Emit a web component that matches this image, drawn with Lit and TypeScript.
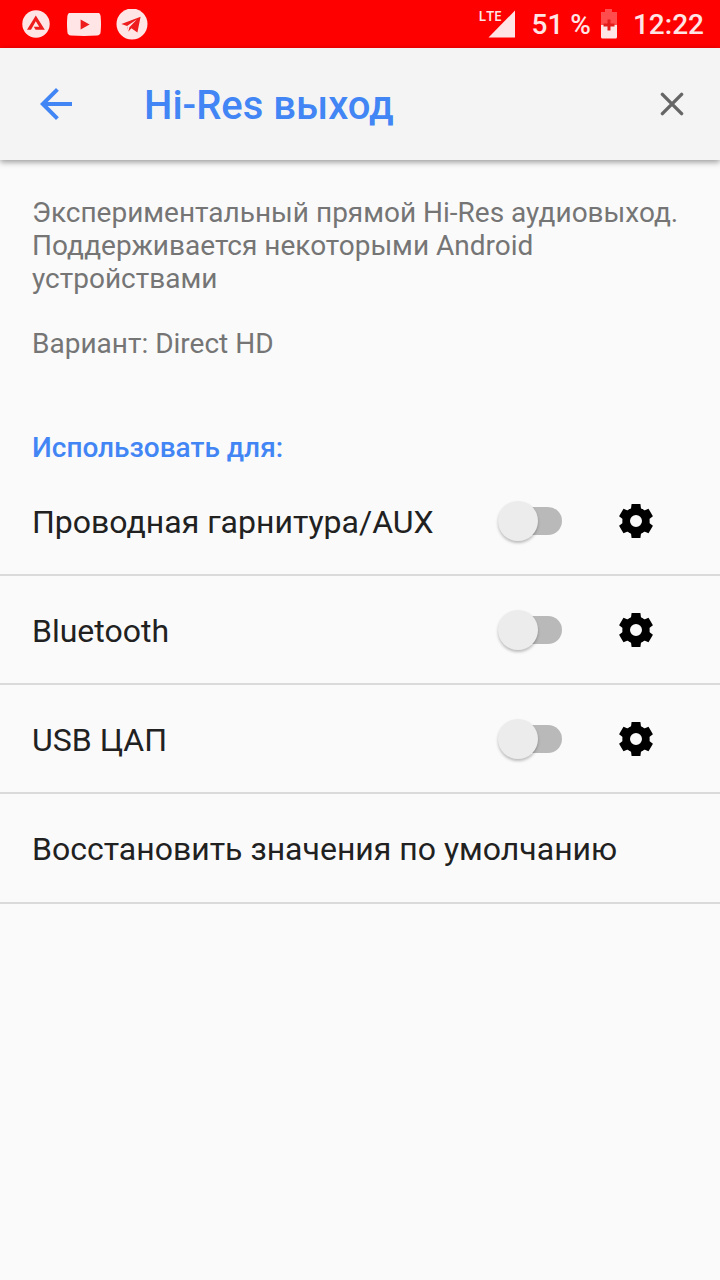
import { LitElement, html, css, svg } from "lit";
import { customElement, property, state } from "lit/decorators.js";

@customElement("status-bar")
class StatusBar extends LitElement {
  static styles = css`
    :host {
      display: flex;
      justify-content: space-between;
      align-items: center;
      box-sizing: border-box;
      height: 48px;
      padding: 2px 16px 0 20px;
      background: #ff0000;
      color: #ffe5e5;
      font-size: 28px;
      line-height: 32px;
      font-weight: 500;
    }
    .group {
      display: flex;
      align-items: center;
      gap: 15px;
    }
    .system {
      gap: 8px;
    }
    .icon {
      display: block;
      flex: none;
    }
    .network {
      position: relative;
      margin-right: 8px;
    }
    .lte {
      position: absolute;
      top: 0;
      left: 0;
      font-family: "Open Sans", sans-serif;
      font-size: 14px;
      line-height: 14px;
      font-weight: 600;
    }
    .clock {
      margin-left: 6px;
    }
  `;

  render() {
    return html`
      <div class="group">
        <svg class="icon" width="32" height="32" viewBox="0 0 32 32" aria-hidden="true">
          <circle cx="16" cy="15" r="13.7" fill="#ffe5e5" />
          <path d="M15.8 6.4L24.8 20.8H15.6L13.8 17.8H19.2L15.8 12.2L11 20.8H7Z" fill="#ee1c1c" />
        </svg>
        <svg class="icon" width="34" height="24" viewBox="0 0 34 24" aria-hidden="true">
          <path d="M4 .4Q17-.4 30 .4Q33.2.6 33.6 4Q34.4 12 33.6 20Q33.2 23.4 30 23.6Q17 24.4 4 23.6Q.8 23.4.4 20Q-.4 12 .4 4Q.8.6 4 .4Z" fill="#ffe5e5" transform="translate(0 -1)" />
          <path d="M13.6 6.6L22.6 11.4L13.6 16.4Z" fill="#ee1c1c" />
        </svg>
        <svg class="icon" width="32" height="32" viewBox="0 0 32 32" aria-hidden="true">
          <circle cx="16" cy="15" r="15.5" fill="#ffe5e5" />
          <path d="M5.4 15L24.6 7.8L21.4 23.6L15.4 19.2L12.4 22.4L11 17Z" fill="#ee1c1c" />
          <path d="M11 17L20.8 10.6L13.4 18.2L12.4 22.4Z" fill="#ffe5e5" />
        </svg>
      </div>
      <div class="group system">
        <div class="network">
          <span class="lte">LTE</span>
          <svg class="icon" width="37" height="32" viewBox="0 0 37 32" aria-hidden="true">
            <path d="M9.5 28.5L36 1.5V28.5Z" fill="#ffe5e5" />
          </svg>
        </div>
        <span>51 %</span>
        <svg class="icon" width="20" height="32" viewBox="0 0 20 32" aria-hidden="true">
          <path d="M2 3H6V0H13V3H18V16H2Z" fill="#ff4c4c" />
          <path d="M2 16H18V28Q18 29.5 16.5 29.5H3.5Q2 29.5 2 28Z" fill="#ffe5e5" />
          <path d="M10 10.5V21.5M4.5 16H15.5" stroke="#e51c1c" stroke-width="3" />
        </svg>
        <span class="clock">12:22</span>
      </div>
    `;
  }
}

@customElement("app-header")
class AppHeader extends LitElement {
  @property() heading = "";

  static styles = css`
    :host {
      display: flex;
      align-items: center;
      height: 112px;
      background: #f4f4f4;
      box-shadow: 0 2px 6px rgba(0, 0, 0, 0.4);
      color: #4285f4;
    }
    .button {
      display: flex;
      align-items: center;
      justify-content: center;
      flex: none;
      border: 0;
      padding: 0;
      background: none;
      width: 112px;
      height: 112px;
      color: inherit;
    }
    .close {
      width: 96px;
      color: #666;
    }
    .title {
      flex: 1;
      margin: 0;
      padding: 4px 0 0 32px;
      font-size: 40px;
      line-height: 48px;
      font-weight: 500;
    }
  `;

  render() {
    return html`
      <button class="button" aria-label="Назад">
        <svg width="48" height="48" viewBox="0 0 24 24" fill="currentColor">
          <path d="M20 11H7.83l5.59-5.59L12 4l-8 8 8 8 1.41-1.41L7.83 13H20z" />
        </svg>
      </button>
      <h1 class="title">${this.heading}</h1>
      <button class="button close" aria-label="Закрыть">
        <svg width="24" height="24" viewBox="0 0 24 24" stroke="currentColor" stroke-width="3.4" stroke-linecap="round">
          <path d="M2.4 2.4L21.6 21.6M21.6 2.4L2.4 21.6" />
        </svg>
      </button>
    `;
  }
}

const tooth = (angle: number) =>
  svg`<path d="M-4.4 -17H4.4L5 -12.5L7 -11H-7L-5 -12.5Z" transform="rotate(${angle})" />`;

@customElement("output-row")
class OutputRow extends LitElement {
  @property() label = "";
  @state() private enabled = false;

  static styles = css`
    :host {
      display: flex;
      align-items: center;
      box-sizing: border-box;
      min-height: 109px;
      padding: 0 46px 0 32px;
      border-bottom: 2px solid #dadada;
    }
    .label {
      flex: 1;
      padding-top: 2px;
      font-size: 32px;
      line-height: 40px;
    }
    .switch {
      appearance: none;
      display: flex;
      align-items: center;
      flex: none;
      width: 58px;
      height: 28px;
      margin: 0 36px 0 16px;
      border-radius: 14px;
      background: #b9b9b9;
    }
    .switch::before {
      content: "";
      flex: none;
      width: 40px;
      height: 40px;
      margin-left: -6px;
      border-radius: 50%;
      background: #ececec;
      box-shadow: 0 2px 3px rgba(0, 0, 0, 0.25);
    }
    .switch:checked::before {
      margin-left: 24px;
      background: #4285f4;
    }
    .settings {
      display: flex;
      align-items: center;
      justify-content: center;
      flex: none;
      width: 76px;
      height: 76px;
      padding: 0;
      border: 0;
      background: none;
      color: #000;
    }
  `;

  private toggle(event: Event) {
    this.enabled = (event.target as HTMLInputElement).checked;
  }

  render() {
    return html`
      <label class="label" for="toggle">${this.label}</label>
      <input id="toggle" class="switch" type="checkbox" role="switch" .checked=${this.enabled} @change=${this.toggle} />
      <button class="settings" aria-label="Настройки: ${this.label}">
        <svg width="36" height="36" viewBox="-18 -18 36 36" fill="currentColor">
          ${[0, 60, 120, 180, 240, 300].map(tooth)}
          <circle r="9.8" fill="none" stroke="currentColor" stroke-width="7.6" />
        </svg>
      </button>
    `;
  }
}

@customElement("app-root")
class AppRoot extends LitElement {
  static styles = css`
    :host {
      display: block;
      min-height: 100vh;
      background: #fafafa;
      color: #212121;
      font-family: Roboto, sans-serif;
    }
    .intro {
      padding: 36px 32px 0;
      font-size: 28px;
      line-height: 33px;
      color: #757575;
    }
    .text {
      margin: 0 0 32px;
    }
    .section {
      margin: 0;
      padding: 39px 32px 3px;
      font-size: 28px;
      line-height: 33px;
      font-weight: 500;
      color: #4285f4;
    }
    .reset {
      display: block;
      width: 100%;
      min-height: 110px;
      padding: 2px 32px 0;
      border: 0;
      border-bottom: 2px solid #dadada;
      background: none;
      color: inherit;
      font: inherit;
      font-size: 32px;
      line-height: 40px;
      text-align: left;
    }
  `;

  render() {
    return html`
      <status-bar></status-bar>
      <app-header heading="Hi-Res выход"></app-header>
      <main>
        <div class="intro">
          <p class="text">
            Экспериментальный прямой Hi-Res аудиовыход. Поддерживается некоторыми Android устройствами
          </p>
          <p class="text">Вариант: Direct HD</p>
        </div>
        <h2 class="section">Использовать для:</h2>
        ${["Проводная гарнитура/AUX", "Bluetooth", "USB ЦАП"].map(
          (name) => html`<output-row label=${name}></output-row>`
        )}
        <button class="reset">Восстановить значения по умолчанию</button>
      </main>
    `;
  }
}
